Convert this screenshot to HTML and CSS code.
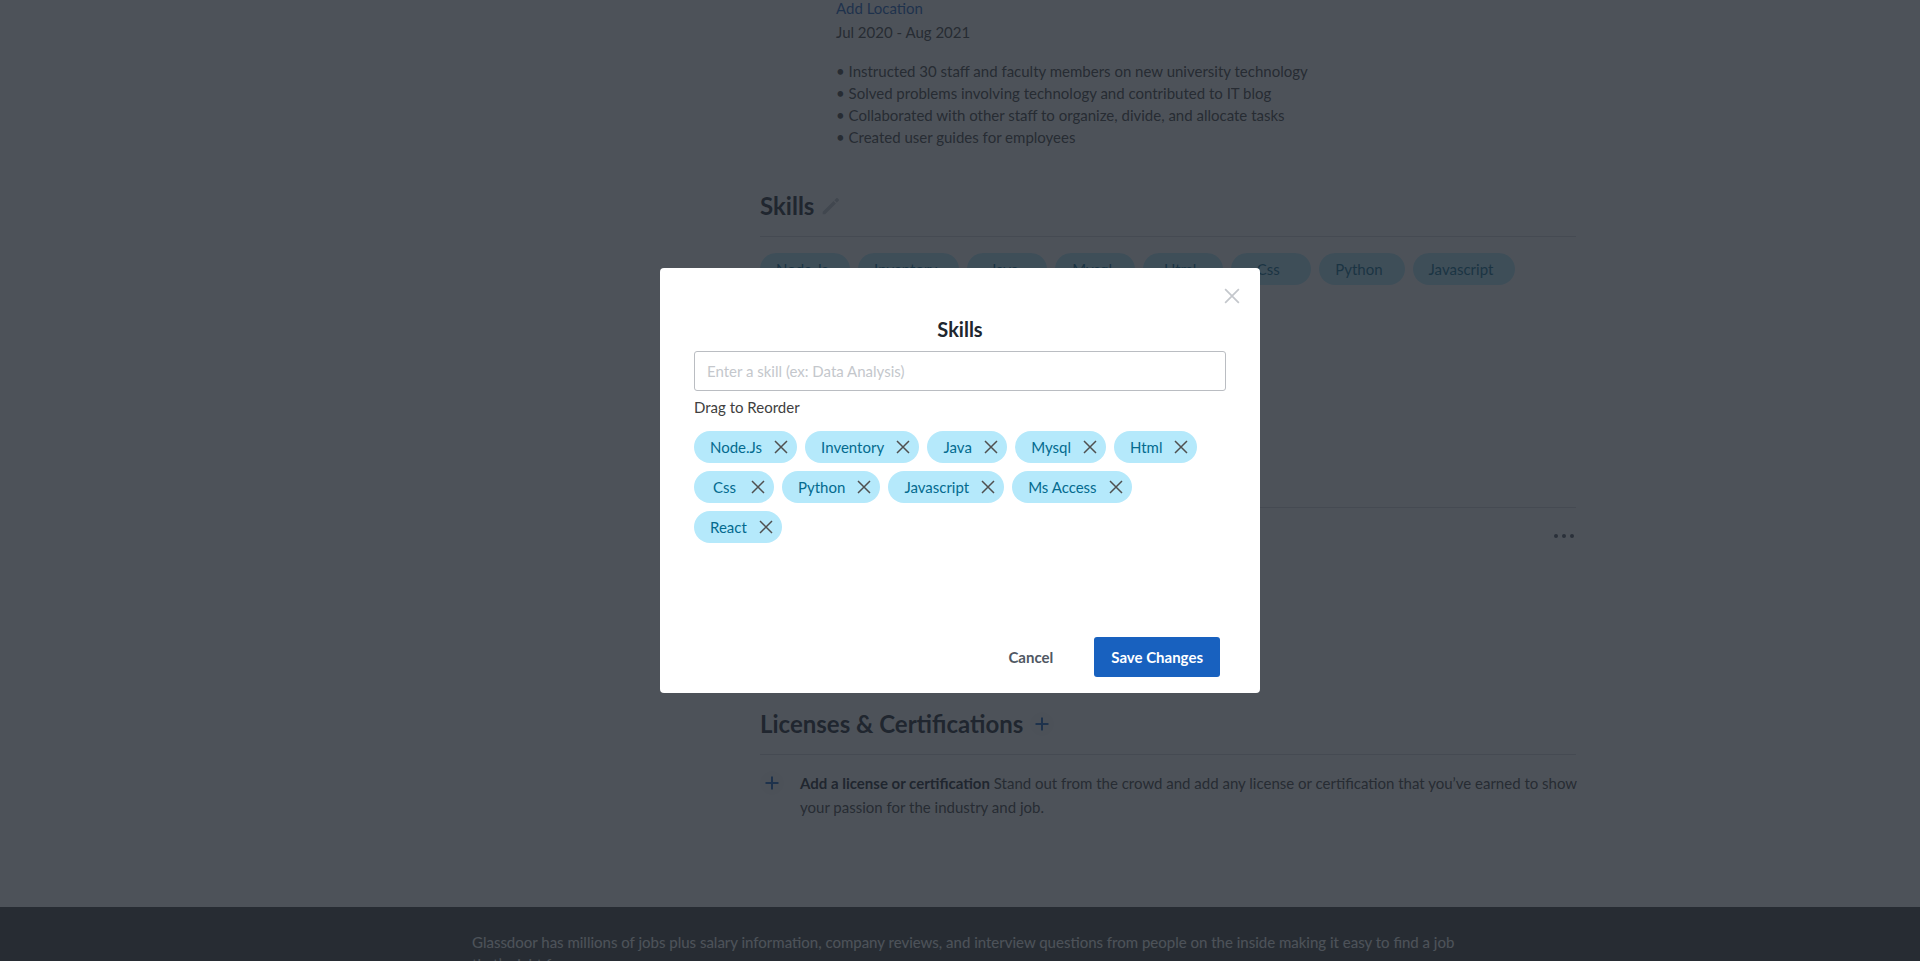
FILE: index.html
```html
<!DOCTYPE html>
<html lang="en">
<head>
<meta charset="utf-8">
<title>Profile - Skills</title>
<link rel="stylesheet" href="styles.css">
</head>
<body>
<svg class="sprite" aria-hidden="true">
  <symbol id="cross" viewBox="0 0 14 14"><path d="M1 1l12 12M13 1L1 13" fill="none" stroke="currentColor" stroke-width="1.500"/></symbol>
  <symbol id="plus" viewBox="0 0 24 24"><path d="M12 5.500v13M5.500 12h13" fill="none" stroke="currentColor" stroke-width="2"/></symbol>
</svg>
<div class="page">
  <main class="profile">
    <section class="experience">
      <a class="location" href="#">Add Location</a>
      <p class="dates">Jul 2020 - Aug 2021</p>
      <p class="duties">• Instructed 30 staff and faculty members on new university technology<br>• Solved problems involving technology and contributed to IT blog<br>• Collaborated with other staff to organize, divide, and allocate tasks<br>• Created user guides for employees</p>
    </section>
    <section class="section skills">
      <header class="section-head">
        <h2>Skills</h2>
        <button class="icon-button edit" aria-label="Edit skills"><svg viewBox="0 0 24 24"><path d="M2 19v3h3L18 9l-3-3z M19 8l2.500-2.500a1 1 0 0 0 0-1.200l-1.800-1.800a1 1 0 0 0-1.200 0L16 5z" fill="currentColor"/></svg></button>
      </header>
      <ul class="chips">
        <li class="chip">Node.Js</li>
        <li class="chip">Inventory</li>
        <li class="chip">Java</li>
        <li class="chip">Mysql</li>
        <li class="chip">Html</li>
        <li class="chip">Css</li>
        <li class="chip">Python</li>
        <li class="chip">Javascript</li>
      </ul>
    </section>
    <section class="section education">
      <header class="section-head"></header>
      <div class="entry">
        <button class="more" aria-label="More options"><svg viewBox="0 0 20 4"><g fill="currentColor"><circle cx="2" cy="2" r="2"/><circle cx="10" cy="2" r="2"/><circle cx="18" cy="2" r="2"/></g></svg></button>
      </div>
    </section>
    <section class="section">
      <header class="section-head">
        <h2>Licenses &amp; Certifications</h2>
        <button class="icon-button" aria-label="Add license"><svg><use href="#plus"/></svg></button>
      </header>
      <div class="prompt">
        <button class="icon-button" aria-label="Add a license or certification"><svg><use href="#plus"/></svg></button>
        <p><strong>Add a license or certification</strong> Stand out from the crowd and add any license or certification that you’ve earned to show your passion for the industry and job.</p>
      </div>
    </section>
  </main>
  <footer class="footer">
    <p>Glassdoor has millions of jobs plus salary information, company reviews, and interview questions from people on the inside making it easy to find a job that’s right for you.</p>
  </footer>
</div>
<div class="overlay">
  <div class="modal" role="dialog" aria-modal="true" aria-labelledby="modal-title">
    <button class="close" aria-label="Close"><svg><use href="#cross"/></svg></button>
    <h3 id="modal-title">Skills</h3>
    <input class="skill-input" type="text" aria-label="Skill" placeholder="Enter a skill (ex: Data Analysis)">
    <p class="hint">Drag to Reorder</p>
    <ul class="chips">
      <li class="chip removable"><span>Node.Js</span><button aria-label="Remove Node.Js"><svg><use href="#cross"/></svg></button></li>
      <li class="chip removable"><span>Inventory</span><button aria-label="Remove Inventory"><svg><use href="#cross"/></svg></button></li>
      <li class="chip removable"><span>Java</span><button aria-label="Remove Java"><svg><use href="#cross"/></svg></button></li>
      <li class="chip removable"><span>Mysql</span><button aria-label="Remove Mysql"><svg><use href="#cross"/></svg></button></li>
      <li class="chip removable"><span>Html</span><button aria-label="Remove Html"><svg><use href="#cross"/></svg></button></li>
      <li class="chip removable"><span>Css</span><button aria-label="Remove Css"><svg><use href="#cross"/></svg></button></li>
      <li class="chip removable"><span>Python</span><button aria-label="Remove Python"><svg><use href="#cross"/></svg></button></li>
      <li class="chip removable"><span>Javascript</span><button aria-label="Remove Javascript"><svg><use href="#cross"/></svg></button></li>
      <li class="chip removable"><span>Ms Access</span><button aria-label="Remove Ms Access"><svg><use href="#cross"/></svg></button></li>
      <li class="chip removable"><span>React</span><button aria-label="Remove React"><svg><use href="#cross"/></svg></button></li>
    </ul>
    <div class="actions">
      <button class="button">Cancel</button>
      <button class="button primary">Save Changes</button>
    </div>
  </div>
</div>
</body>
</html>
```
FILE: styles.css
```css
* { box-sizing: border-box; }
body {
  margin: 0;
  background: #fff;
  color: #404040;
  font: 15px/24px Lato, "Liberation Sans", sans-serif;
}
h2, h3, p, ul { margin: 0; padding: 0; }
ul { list-style: none; }
button {
  padding: 0;
  border: 0;
  background: none;
  color: inherit;
  font: inherit;
  cursor: pointer;
}
svg { display: block; width: 100%; height: 100%; }
.sprite { display: none; }

.page { height: 100vh; overflow: hidden; }
.profile {
  width: 816px;
  max-width: 100%;
  margin: -4px 0 0 max(0px, calc(50% - 200px));
  padding-bottom: 88px;
}
.experience { padding: 0 0 2px 76px; }
.location { display: block; color: #1861bf; text-decoration: none; }
.duties { margin-top: 16px; line-height: 22px; }

.section { padding-top: 40px; }
.section-head {
  display: flex;
  align-items: center;
  gap: 7px;
  min-height: 47px;
  margin-bottom: 16px;
  padding-bottom: 14px;
  border-bottom: 1px solid #d4d6da;
}
h2 { color: #20262e; font-size: 24px; line-height: 32px; }
.icon-button {
  flex: none;
  width: 24px;
  height: 24px;
  border-radius: 50%;
  background: #f9fafb;
  color: #1861bf;
}
.edit { width: 20px; background: none; color: #c4c7cc; }
.edit svg { width: 20px; height: 24px; }

.chips { display: flex; flex-wrap: wrap; gap: 8px; }
.chip {
  min-width: 80px;
  padding: 0 22px 0 16px;
  border-radius: 16px;
  background: #b5e9fb;
  color: #046b8f;
  line-height: 32px;
  text-align: center;
}
.skills { padding-bottom: 136px; }
.entry { display: flex; justify-content: flex-end; align-items: flex-start; height: 144px; padding: 10px 2px; }
.more { width: 20px; height: 4px; color: #505863; }
.prompt { display: flex; gap: 16px; margin-right: -8px; }
.prompt p { flex: 1; }
.prompt strong { color: #20262e; }

.footer { min-height: 200px; padding: 24px 460px 24px 472px; background: #404440; color: #fff; line-height: 22px; }

.overlay {
  position: fixed;
  inset: 0;
  display: flex;
  align-items: center;
  justify-content: center;
  background: rgba(33, 39, 48, .8);
}
.modal {
  display: flex;
  flex-direction: column;
  width: 600px;
  max-width: 100%;
  min-height: 425px;
  padding: 16px 34px;
  border-radius: 4px;
  background: #fff;
}
.close { align-self: flex-end; width: 24px; height: 24px; margin-right: -18px; padding: 4px; color: #c4c7cc; }
h3 { margin-top: 9px; color: #20262e; font-size: 20px; line-height: 24px; text-align: center; }
.skill-input {
  width: 100%;
  height: 40px;
  margin-top: 10px;
  padding: 0 12px;
  border: 1px solid #babdc2;
  border-radius: 3px;
  color: #404040;
  font: 15px/24px Lato, "Liberation Sans", sans-serif;
}
.skill-input::placeholder { color: #c4c7cc; }
.hint { margin: 4px 0 12px; }
.removable { display: flex; align-items: center; padding-right: 8px; }
.removable span { flex: 1; }
.removable button { width: 16px; height: 16px; margin-left: 11px; padding: 1px; color: #505050; }
.actions { display: flex; justify-content: flex-end; gap: 24px; margin-top: auto; padding-right: 6px; }
.button { height: 40px; padding: 0 17px; border-radius: 3px; color: #505863; font-weight: 700; }
.primary { background: #1861bf; color: #fff; }
```
